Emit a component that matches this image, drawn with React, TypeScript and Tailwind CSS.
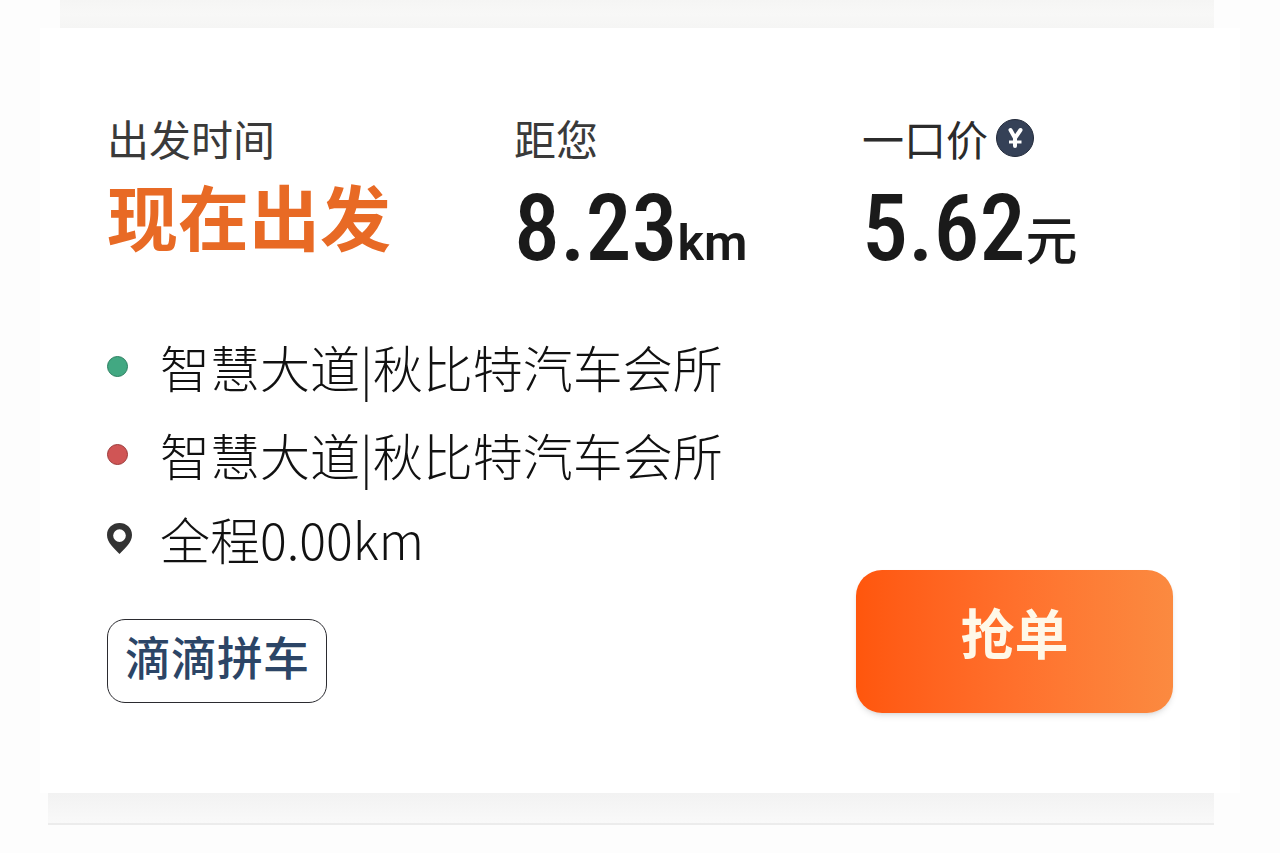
import React from "react";

type StopProps = {
  color: string;
  name: string;
};

const Stop = ({ color, name }: StopProps) => (
  <li className="flex items-center">
    <span className={`w-[21px] h-[21px] rounded-full border shrink-0 ${color}`} />
    <span className="ml-8">{name}</span>
  </li>
);

const PinIcon = () => (
  <svg width="25" height="33" viewBox="0 0 26 34" fill="#333333" aria-hidden="true">
    <path
      fillRule="evenodd"
      d="M13 1C6 1 0 6 0 13.4C0 21 7 27 13 33C19 27 26 21 26 13.4C26 6 20 1 13 1ZM13 7.4A6.6 6.6 0 1 1 13 20.6A6.6 6.6 0 1 1 13 7.4Z"
    />
  </svg>
);

const YuanIcon = () => (
  <svg width="38" height="38" viewBox="0 0 38 38" fill="none" aria-hidden="true">
    <circle cx="19" cy="19" r="18.5" fill="#354157" stroke="#232b3b" />
    <path
      d="M14.5 11L19 19L24.5 11M19 19V27"
      stroke="#ffffff"
      strokeWidth="4"
      strokeLinecap="round"
      strokeLinejoin="round"
    />
    <path d="M13 23H25.5" stroke="#ffffff" strokeWidth="3" />
  </svg>
);

const OrderCard = () => {
  return (
    <div className="min-h-screen bg-[#fdfdfd] text-[#1a1a1a] font-['Noto_Sans_CJK_SC',sans-serif]">
      {/* Edge of the previous card */}
      <div className="h-7 ml-[60px] mr-[66px] bg-gradient-to-b from-[#f5f5f4] via-[#f8f8f7] to-[#f5f5f4]" />

      <div className="mx-10 bg-white px-[67px] py-20">
        {/* Time, distance and price */}
        <div className="grid grid-cols-[407fr_348fr_311fr]">
          <div>
            <p className="text-[42px] leading-[60px] text-[#3a3a3a]">出发时间</p>
            <p className="text-[71px] leading-[92px] font-bold text-[#e86a25]">现在出发</p>
          </div>
          <div>
            <p className="text-[42px] leading-[60px] text-[#3a3a3a]">距您</p>
            <p className="flex items-baseline h-[122px] leading-[122px] font-['Roboto_Condensed','Noto_Sans_CJK_SC',sans-serif] whitespace-nowrap">
              <span className="text-[92px] font-medium">8.23</span>
              <span className="text-[50px] font-['Roboto',sans-serif] font-semibold">km</span>
            </p>
          </div>
          <div>
            <p className="flex items-center gap-2 text-[42px] leading-[60px] text-[#2b2b2b]">
              一口价
              <YuanIcon />
            </p>
            <p className="flex items-baseline h-[122px] leading-[122px] font-['Roboto_Condensed','Noto_Sans_CJK_SC',sans-serif] whitespace-nowrap">
              <span className="text-[92px] font-medium">5.62</span>
              <span className="text-[52px] font-medium">元</span>
            </p>
          </div>
        </div>

        {/* Route */}
        <ul className="mt-8 text-[50px] leading-[88px] font-light text-[#111111]">
          <Stop color="bg-[#42a882] border-[#2c7f60]" name="智慧大道|秋比特汽车会所" />
          <Stop color="bg-[#d05555] border-[#9c3a3a]" name="智慧大道|秋比特汽车会所" />
          <li className="flex items-center pt-2 leading-[64px]">
            <PinIcon />
            <span className="ml-7">全程0.00km</span>
          </li>
        </ul>

        {/* Service type and action */}
        <div className="flex items-end justify-between">
          <span className="rounded-[18px] border border-[#2b2b30] px-[17px] h-[84px] leading-[70px] text-[46px] font-medium text-[#2c4566] mb-[10px]">
            滴滴拼车
          </span>
          <button
            type="button"
            className="w-[317px] h-[143px] pb-5 rounded-[26px] bg-gradient-to-r from-[#ff560c] via-[#ff702c] to-[#fb8a40] text-[54px] font-bold text-[#fff8e8] shadow-md"
          >
            抢单
          </button>
        </div>
      </div>

      {/* Edge of the next card */}
      <div className="h-8 ml-[48px] mr-[66px] border-b-2 border-[#ececec] bg-gradient-to-b from-[#f2f2f2] to-[#f9f9f9]" />
    </div>
  );
};

export default function App() {
  return <OrderCard />;
}
